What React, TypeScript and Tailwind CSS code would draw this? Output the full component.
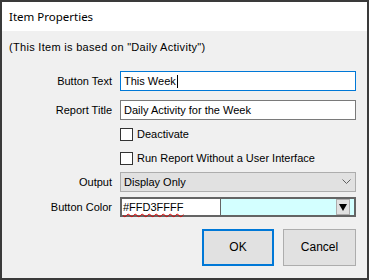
export default function App() {
  const font = { fontFamily: '"Liberation Sans", Arial, sans-serif' };
  return (
    <div className="w-[369px] h-[280px] border-2 border-[#3a3a3a] flex flex-col bg-[#f0f0f0] text-[11px] leading-[13px] text-black" style={font}>
      <div className="h-[29px] shrink-0 bg-white flex items-center pl-[7px] text-[11.5px] text-black" style={{ fontFamily: '"Noto Sans", "Open Sans", sans-serif' }}>
        Item Properties
      </div>

      <div className="flex-1 flex flex-col">
        <div className="mt-[10px] pl-[7px] tracking-[0.3px]">(This Item is based on "Daily Activity")</div>

        <div className="mt-[17px] flex items-center h-[20px]">
          <div className="w-[110px] text-right">Button Text</div>
          <div className="ml-[8px] w-[236px] h-[20px] bg-white border border-[#0078d7] flex items-center pl-[3px]">
            This Week<span className="w-px h-[13px] bg-black ml-px" />
          </div>
        </div>

        <div className="mt-[9px] flex items-center h-[20px]">
          <div className="w-[110px] text-right">Report Title</div>
          <div className="ml-[8px] w-[236px] h-[20px] bg-white border border-[#7a7a7a] flex items-center pl-[3px]">
            Daily Activity for the Week
          </div>
        </div>

        <div className="mt-[4px] flex items-center h-[20px] pl-[118px]">
          <span className="w-[13px] h-[13px] bg-white border border-[#333]" />
          <span className="ml-[4px]">Deactivate</span>
        </div>

        <div className="mt-[4px] flex items-center h-[20px] pl-[118px]">
          <span className="w-[13px] h-[13px] bg-white border border-[#333]" />
          <span className="ml-[4px]">Run Report Without a User Interface</span>
        </div>

        <div className="mt-[4px] flex items-center h-[20px]">
          <div className="w-[110px] text-right">Output</div>
          <div className="ml-[8px] w-[236px] h-[20px] bg-[#e1e1e1] border border-[#adadad] flex items-center pl-[3px] pr-[4px]">
            <span className="flex-1">Display Only</span>
            <svg width="9" height="6" viewBox="0 0 9 6" fill="none">
              <path d="M0.5 0.5 L4.5 4.5 L8.5 0.5" stroke="#606060" strokeWidth="1" />
            </svg>
          </div>
        </div>

        <div className="mt-[5px] flex items-center h-[20px]">
          <div className="w-[110px] text-right">Button Color</div>
          <div className="ml-[8px] w-[236px] h-[20px] border-2 border-[#646464] flex">
            <div className="w-[99px] bg-white border-r border-[#646464] flex items-center pl-[1px]">
              <span className="underline decoration-wavy decoration-[#e00000] decoration-1 underline-offset-2">#FFD3FFFF</span>
            </div>
            <div className="flex-1 bg-[#d3ffff] flex items-center justify-end pr-[4px]">
              <div className="w-[14px] h-[16px] bg-[#e1e1e1] border border-[#adadad] flex items-center justify-center">
                <svg width="8" height="7" viewBox="0 0 8 7">
                  <path d="M0 0 H8 L4 7 Z" fill="#000" />
                </svg>
              </div>
            </div>
          </div>
        </div>

        <div className="mt-[12px] flex pl-[200px] gap-[9px]">
          <button className="w-[72px] h-[37px] bg-[#e1e1e1] border-2 border-[#0078d7] text-[12px]" style={font}>OK</button>
          <button className="w-[73px] h-[37px] bg-[#e1e1e1] border border-[#adadad] text-[12px]" style={font}>Cancel</button>
        </div>
      </div>
    </div>
  );
}
